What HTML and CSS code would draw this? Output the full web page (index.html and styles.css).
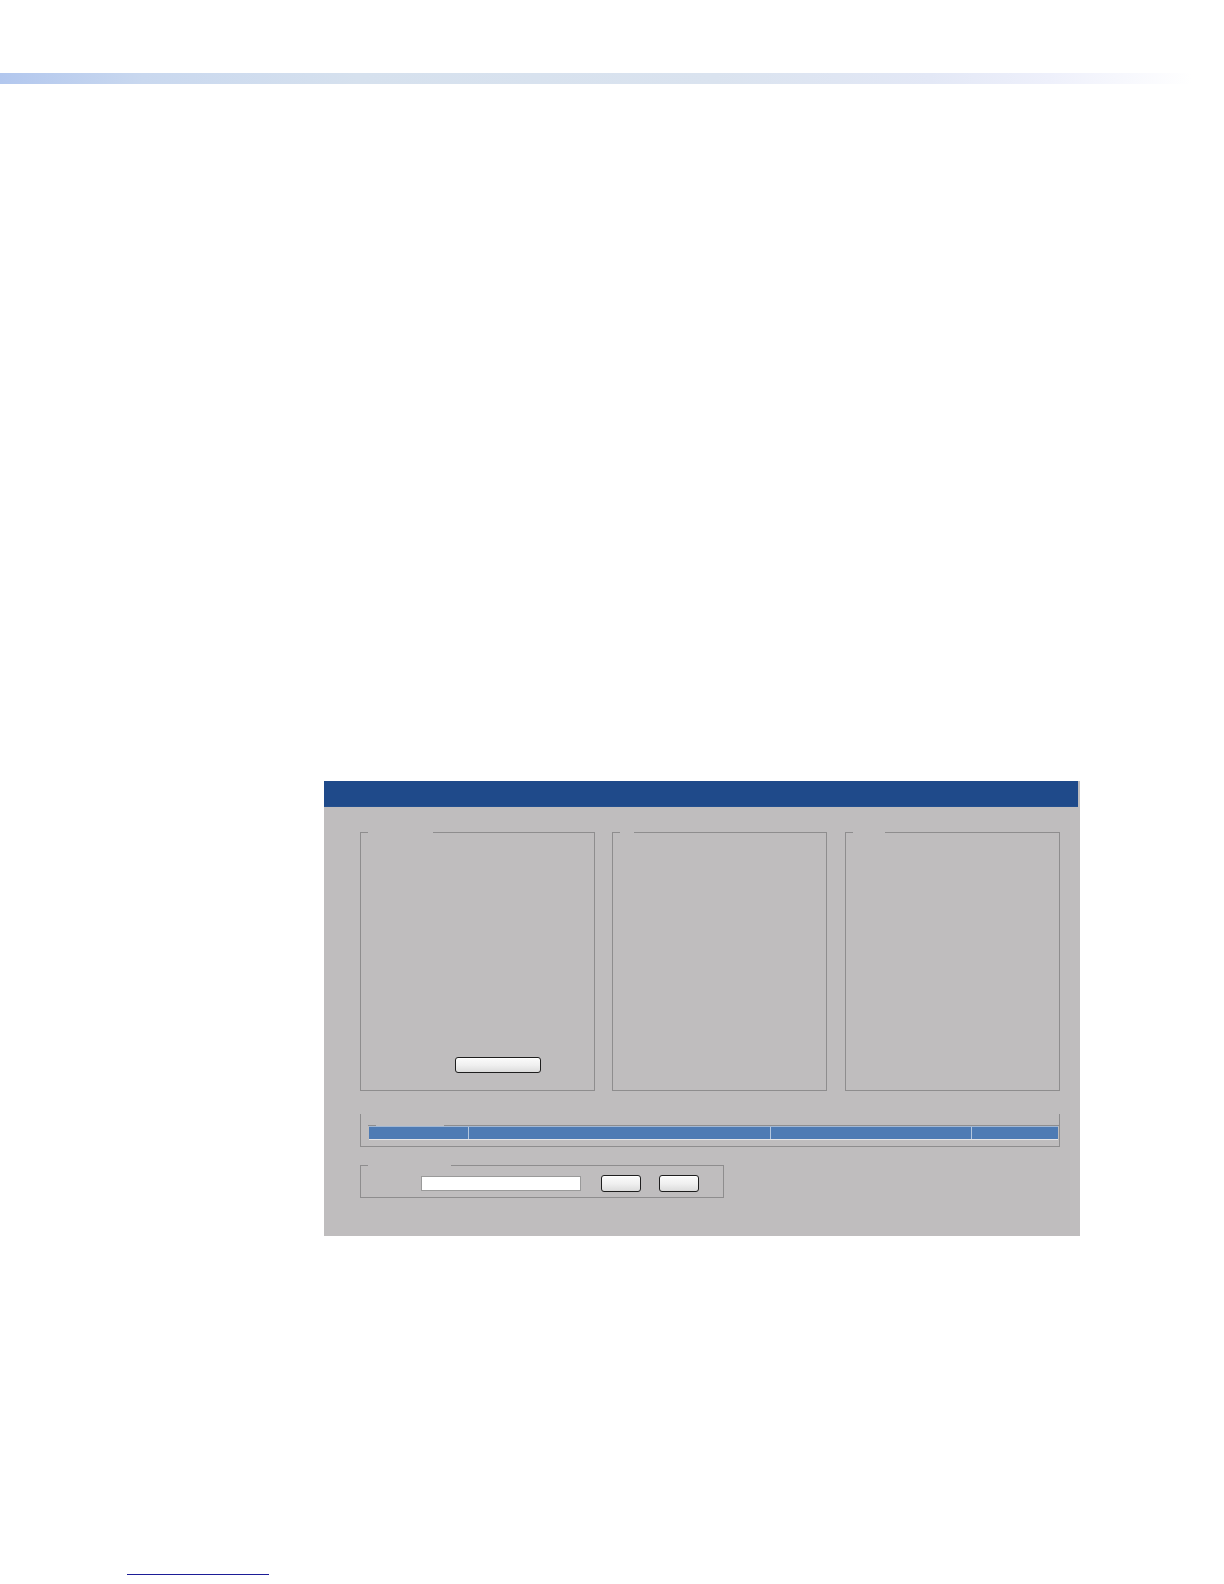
FILE: index.html
```html
<!DOCTYPE html>
<html>
<head>
<meta charset="utf-8">
<link rel="stylesheet" href="styles.css">
</head>
<body>
<div class="page">
  <div class="topbar"></div>

  <div class="window">
    <div class="titlebar"></div>
    <div class="win-body">
      <div class="box-row">
        <div class="group box1">
          <div class="group-top"><span class="seg-a"></span><span class="seg-gap g65"></span><span class="seg-b"></span></div>
          <div class="box1-content">
            <button class="btn btn-wide" type="button"></button>
          </div>
        </div>
        <div class="group box2">
          <div class="group-top"><span class="seg-a"></span><span class="seg-gap g14"></span><span class="seg-b"></span></div>
        </div>
        <div class="group box3">
          <div class="group-top"><span class="seg-a"></span><span class="seg-gap g32"></span><span class="seg-b"></span></div>
        </div>
      </div>

      <div class="group table-group">
        <div class="group-top"><span class="seg-a"></span><span class="seg-gap g68"></span><span class="seg-b"></span></div>
        <div class="table-head">
          <div class="col c1"></div>
          <div class="col c2"></div>
          <div class="col c3"></div>
          <div class="col c4"></div>
        </div>
      </div>

      <div class="group entry-group">
        <div class="group-top"><span class="seg-a"></span><span class="seg-gap g83"></span><span class="seg-b"></span></div>
        <div class="entry-row">
          <div class="text-input"></div>
          <button class="btn btn-small first" type="button"></button>
          <button class="btn btn-small" type="button"></button>
        </div>
      </div>
    </div>
  </div>

  <div class="footer-rule"></div>
</div>
</body>
</html>
```

FILE: styles.css
```css
* { box-sizing: border-box; }

html, body {
  margin: 0;
  padding: 0;
  background: #ffffff;
  font-family: "Liberation Sans", Arial, sans-serif;
}

.page {
  width: 1224px;
  height: 1584px;
  padding-top: 73px;
  overflow: hidden;
}

.topbar {
  width: 1192px;
  height: 11px;
  background: linear-gradient(to right,
    #b2c7ee 0%,
    #c9d8ef 12%,
    #d6e1ee 30%,
    #dae3ef 60%,
    #e3e8f6 78%,
    #eef0fb 88%,
    #ffffff 100%);
}

.window {
  margin-top: 697px;
  margin-left: 324px;
  width: 756px;
  height: 455px;
  background: #bfbdbe;
}

.titlebar {
  width: 754px;
  height: 26px;
  background: #1f4a8a;
  border-bottom: 1px solid #24508f;
}

.win-body {
  padding: 25px 0 0 36px;
}

.box-row {
  display: flex;
  height: 259px;
}

.group {
  border: 1px solid #8e8d8e;
  border-top: none;
  display: flex;
  flex-direction: column;
}

.group-top {
  display: flex;
  height: 1px;
  margin: 0 -1px;
  flex: none;
}
.seg-a, .seg-b { border-top: 1px solid #8e8d8e; }
.seg-a { width: 8px; }
.seg-b { flex: 1; }
.g14 { width: 14px; }
.g32 { width: 32px; }
.g65 { width: 65px; }
.g68 { width: 68px; }
.g83 { width: 83px; }

.box1 { width: 235px; }
.box2 { width: 215px; margin-left: 17px; }
.box3 { width: 215px; margin-left: 18px; }

.box1-content {
  flex: 1;
  display: flex;
  flex-direction: column;
  justify-content: flex-end;
  align-items: flex-start;
  padding: 0 0 17px 94px;
}

.btn {
  display: block;
  margin: 0;
  padding: 0;
  border: 1px solid #1e1e1e;
  border-radius: 3px;
  background: linear-gradient(to bottom, #fbfbfb 0%, #f0f0f0 50%, #dcdcdc 100%);
  box-shadow: inset 0 1px 0 #ffffff;
}

.btn-wide { width: 86px; height: 16px; }
.btn-small { width: 40px; height: 17px; margin-left: 18px; }
.btn-small.first { margin-left: 20px; }

.table-group {
  margin-top: 23px;
  width: 700px;
  height: 33px;
  padding: 11px 1px 0 8px;
}

.table-head {
  display: flex;
  height: 14px;
  border-top: 1px solid #a3b8d3;
  border-bottom: 1px solid #e4e4e6;
  background: #4e7bb4;
}

.col { height: 100%; border-right: 1px solid #b3c6de; }
.c1 { width: 100px; }
.c2 { width: 302px; }
.c3 { width: 201px; }
.c4 { flex: 1; border-right: none; }

.entry-group {
  margin-top: 18px;
  width: 364px;
  height: 33px;
}

.entry-row {
  flex: 1;
  display: flex;
  align-items: center;
  padding-left: 60px;
  padding-top: 4px;
}

.text-input {
  width: 160px;
  height: 15px;
  background: #ffffff;
  border: 1px solid #9a9a9a;
}

.footer-rule {
  margin-top: 338px;
  margin-left: 127px;
  width: 142px;
  height: 1px;
  background: #1d1d97;
}
```
